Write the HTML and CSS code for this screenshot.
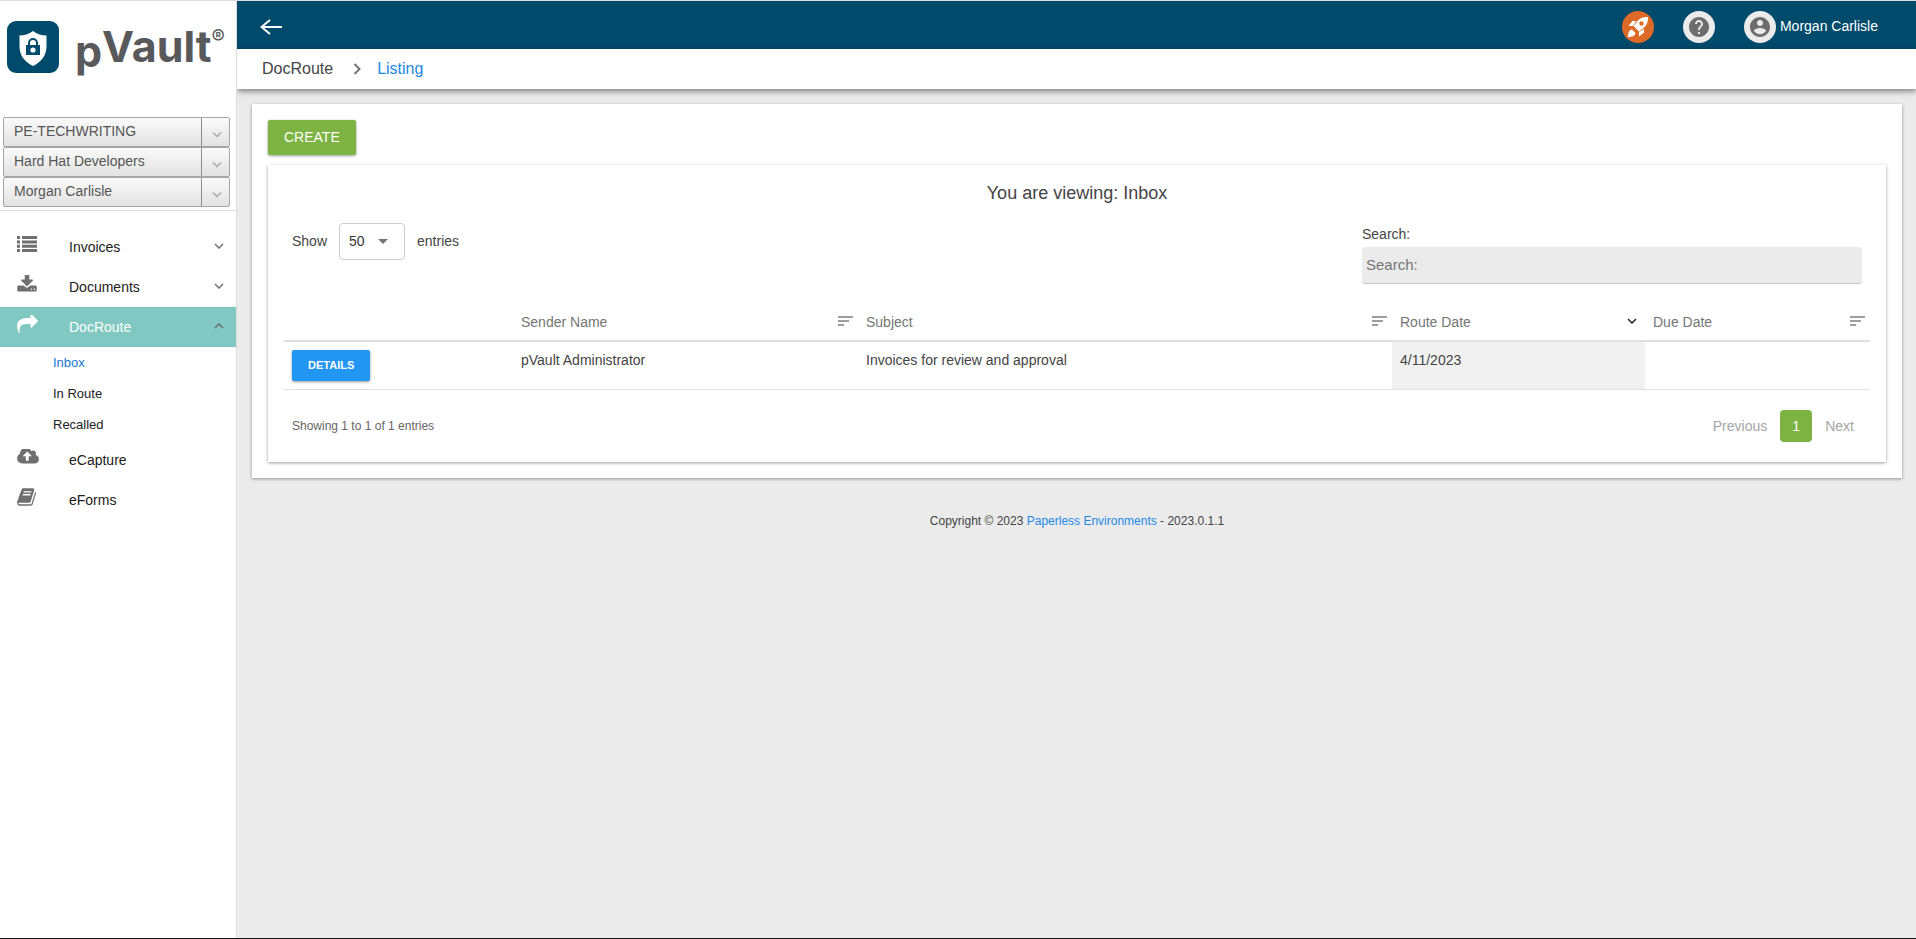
FILE: index.html
```html
<!DOCTYPE html>
<html lang="en">
<head>
<meta charset="utf-8">
<title>pVault - DocRoute</title>
<link rel="stylesheet" href="styles.css">
</head>
<body>
<div class="app">
  <aside class="sidebar">
    <div class="brand">
      <svg class="brand-mark" viewBox="0 0 52 52" width="52" height="52" aria-hidden="true">
        <rect width="52" height="52" rx="9" fill="#004a6c"/>
        <path d="M26 10c4 3 9 4.500 13.500 4.500V25c0 10-5.500 16-13.500 20-8-4-13.500-10-13.500-20V14.500C17 14.500 22 13 26 10z" fill="#fff"/>
        <rect x="19" y="24" width="14" height="10" fill="#004a6c"/>
        <path d="M22 24v-2a4 4 0 0 1 8 0v2" fill="none" stroke="#004a6c" stroke-width="2"/>
        <circle cx="26" cy="29" r="2.600" fill="#fff"/>
      </svg>
      <span class="wordmark"><span class="wordmark-p">p</span><span class="wordmark-rest">Vault</span><span class="wordmark-reg">®</span></span>
    </div>
    <div class="pickers">
      <button class="picker" type="button"><span class="picker-text">PE-TECHWRITING</span><span class="picker-arrow"><svg viewBox="0 0 12 8" width="12" height="8"><path d="M2 1.500l4 4 4-4" fill="none" stroke="#aaa" stroke-width="1.500"/></svg></span></button>
      <button class="picker" type="button"><span class="picker-text">Hard Hat Developers</span><span class="picker-arrow"><svg viewBox="0 0 12 8" width="12" height="8"><path d="M2 1.500l4 4 4-4" fill="none" stroke="#aaa" stroke-width="1.500"/></svg></span></button>
      <button class="picker" type="button"><span class="picker-text">Morgan Carlisle</span><span class="picker-arrow"><svg viewBox="0 0 12 8" width="12" height="8"><path d="M2 1.500l4 4 4-4" fill="none" stroke="#aaa" stroke-width="1.500"/></svg></span></button>
    </div>
    <nav class="menu">
      <a class="menu-item" href="#"><span class="menu-icon"><svg viewBox="0 0 20 16" width="20" height="16"><path d="M0 0h3v3H0zM5 0h15v3H5zM0 4.400h3v3H0zM5 4.400h15v3H5zM0 8.700h3v3H0zM5 8.700h15v3H5zM0 13h3v3H0zM5 13h15v3H5z"/></svg></span><span class="menu-label">Invoices</span><svg class="chev" viewBox="0 0 10 6" width="10" height="6"><path d="M1 1l4 4 4-4"/></svg></a>
      <a class="menu-item" href="#"><span class="menu-icon"><svg viewBox="0 0 1664 1536" width="20" height="18"><path transform="matrix(1 0 0 -1 0 1280)" d="M1280 64q0 26-19 45t-45 19-45-19-19-45 19-45 45-19 45 19 19 45zM1536 64q0 26-19 45t-45 19-45-19-19-45 19-45 45-19 45 19 19 45z" fill="#fff"/><path fill-rule="evenodd" d="M1280 1216a64 64 0 1 0-128 0 64 64 0 1 0 128 0zM1536 1216a64 64 0 1 0-128 0 64 64 0 1 0 128 0zM1664 992v320q0 40-28 68t-68 28H96q-40 0-68-28t-28-68V992q0-40 28-68t68-28h465l135 136q58 56 136 56t136-56l136-136h464q40 0 68 28t28 68zM1339 423q17 41-14 70L877 941q-18 19-45 19t-45-19L339 493q-31-29-14-70 17-39 59-39h256V-64q0-26 19-45t45-19h256q26 0 45 19t19 45v448h256q42 0 59 39z"/></svg></span><span class="menu-label">Documents</span><svg class="chev" viewBox="0 0 10 6" width="10" height="6"><path d="M1 1l4 4 4-4"/></svg></a>
      <a class="menu-item menu-item-active" href="#"><span class="menu-icon"><svg viewBox="0 0 1792 1536" width="21" height="18"><path transform="matrix(1 0 0 -1 0 1408)" d="M1792 896q0-26-19-45L1261 339q-19-19-45-19t-45 19-19 45v256H928q-98 0-175.500-6t-154-21.500-133-42.500-105.500-69.500-80-101-48.500-138.500T214 80q0-55 5-123 0-6 2.500-23.500T224-93q0-15-8.500-25t-23.500-10q-16 0-28 17-7 9-13 22t-13.500 30-10.500 24Q0 250 0 417q0 199 53 333 162 403 875 403h224v256q0 26 19 45t45 19 45-19l512-512q19-19 19-46z"/></svg></span><span class="menu-label">DocRoute</span><svg class="chev" viewBox="0 0 10 6" width="10" height="6"><path d="M1 5l4-4 4 4"/></svg></a>
      <a class="submenu-item submenu-item-current" href="#">Inbox</a>
      <a class="submenu-item" href="#">In Route</a>
      <a class="submenu-item" href="#">Recalled</a>
      <a class="menu-item" href="#"><span class="menu-icon"><svg viewBox="0 0 1920 1408" width="22" height="16"><path transform="matrix(1 0 0 -1 0 1280)" d="M1280 672q0 14-9 23L919 1047q-9 9-23 9t-23-9L522 696q-10-12-10-24 0-14 9-23t23-9h224V288q0-13 9.500-22.500T800 256h192q13 0 22.500 9.500t9.500 22.500v352h224q13 0 22.500 9.500t9.500 22.500zM1920 384q0-159-112.500-271.500T1536 0H448Q263 0 131.500 131.500T0 448q0 130 70 240t188 165q-2 30-2 43 0 212 150 362t362 150q156 0 285.500-87t188.500-231q71 62 166 62 106 0 181-75t75-181q0-76-41-138 130-31 213.500-135.500T1920 384z"/></svg></span><span class="menu-label">eCapture</span></a>
      <a class="menu-item" href="#"><span class="menu-icon"><svg viewBox="0 0 1664 1536" width="19" height="18"><path transform="matrix(1 0 0 -1 0 1408)" d="M1639 1058q40-57 18-129L1382 23q-19-64-76.500-107.500T1183-128H260q-77 0-148.500 53.500T12 57q-24 67-2 127 0 4 3 27t4 37q1 8-3 21.500t-3 19.500q2 11 8 21t16.500 23.500T52 357q23 38 45 91.500t30 91.500q3 10 .5 30t-.5 28q3 11 17 28t17 23q21 36 42 92t25 90q1 9-2.500 32t.5 28q4 13 22 30.500t22 22.500q19 26 42.500 84.500T340 1125q1 8-3 25.500t-2 26.500q2 8 9 18t18 23 17 21q8 12 16.500 30.500t15 35 16 36 19.500 32 26.500 23.500 36 11.500 47.500-5.500l-1-3q38 9 51 9h761q74 0 114-56t18-130l-274-906q-36-119-71.500-153.500T1025 128H156q-27 0-38-15-11-16-1-43 24-70 144-70h923q29 0 56 15.500t35 41.500l300 987q7 22 5 57 38-15 59-43zM575 1056q-4-13 2-22.500t20-9.500h608q13 0 25.500 9.500T1247 1056l21 64q4 13-2 22.500t-20 9.500H638q-13 0-25.500-9.500T596 1120zM492 800q-4-13 2-22.500t20-9.500h608q13 0 25.500 9.500T1164 800l21 64q4 13-2 22.500t-20 9.500H555q-13 0-25.500-9.500T513 864z"/></svg></span><span class="menu-label">eForms</span></a>
    </nav>
  </aside>
  <div class="page">
    <header class="topbar">
      <button class="back" type="button" aria-label="Back"><svg viewBox="0 0 22 16" width="22" height="16"><path d="M22 8H2M10 1L1.500 8l8.500 7" fill="none" stroke="#fff" stroke-width="2"/></svg></button>
      <div class="top-actions">
        <button class="round round-orange" type="button" aria-label="What's new"><svg viewBox="0 0 24 24" width="24" height="24" fill="#fff"><path fill-rule="evenodd" d="M22 2c-5-.3-9 1.500-11.500 5L7.500 11l5.500 5.500 4-3c3.500-2.500 5.300-6.500 5-11.500zM15.500 10.700a2.200 2.200 0 1 1 0-4.400 2.200 2.200 0 0 1 0 4.400zM10 6H6.500L2.500 11H7zM18 14v3.500L13 21.500V17zM6 14.500l3.500 3.500C9 21 6 22 2 22c0-4 1-7 4-7.500z"/></svg></button>
        <button class="round" type="button" aria-label="Help"><svg viewBox="2 2 20 20" width="20" height="20"><path fill="#6d6d6d" d="M12 2C6.480 2 2 6.480 2 12s4.480 10 10 10 10-4.480 10-10S17.520 2 12 2zm1 17h-2v-2h2v2zm2.070-7.750l-.9.920C13.450 12.900 13 13.500 13 15h-2v-.5c0-1.100.45-2.100 1.170-2.830l1.240-1.260c.37-.36.590-.86.590-1.410 0-1.100-.9-2-2-2s-2 .9-2 2H8c0-2.210 1.790-4 4-4s4 1.790 4 4c0 .88-.36 1.680-.93 2.250z"/></svg></button>
        <button class="user" type="button"><span class="round"><svg viewBox="2 2 20 20" width="20" height="20"><path fill="#6d6d6d" d="M12 2C6.480 2 2 6.480 2 12s4.480 10 10 10 10-4.480 10-10S17.520 2 12 2zm0 3c1.660 0 3 1.340 3 3s-1.340 3-3 3-3-1.340-3-3 1.340-3 3-3zm0 14.200c-2.500 0-4.710-1.280-6-3.220.03-1.990 4-3.080 6-3.080 1.990 0 5.970 1.090 6 3.080-1.290 1.940-3.500 3.220-6 3.220z"/></svg></span><span class="user-name">Morgan Carlisle</span></button>
      </div>
    </header>
    <nav class="crumbs" aria-label="Breadcrumb">
      <span>DocRoute</span>
      <svg viewBox="0 0 8 12" width="8" height="12"><path d="M1.500 1l5 5-5 5" fill="none" stroke="#757575" stroke-width="2"/></svg>
      <a href="#">Listing</a>
    </nav>
    <main class="content">
      <section class="card">
        <button class="create" type="button">CREATE</button>
        <div class="panel">
          <h1 class="title">You are viewing: Inbox</h1>
          <div class="filters">
            <div class="length">
              <label for="len">Show</label>
              <span class="select-wrap"><select id="len"><option>50</option></select><svg viewBox="0 0 10 5" width="10" height="5"><path d="M0 0h10L5 5z" fill="#757575"/></svg></span>
              <span>entries</span>
            </div>
            <div class="search">
              <label for="q">Search:</label>
              <input id="q" type="text" placeholder="Search:">
            </div>
          </div>
          <table class="grid">
            <colgroup><col class="c-action"><col class="c-sender"><col class="c-subject"><col class="c-route"><col class="c-due"></colgroup>
            <thead>
              <tr>
                <th></th>
                <th><div class="th">Sender Name<svg class="sort" viewBox="0 0 16 10" width="16" height="10"><path d="M0 0h15v2H0zM0 4h11v2H0zM0 8h6v2H0z"/></svg></div></th>
                <th><div class="th">Subject<svg class="sort" viewBox="0 0 16 10" width="16" height="10"><path d="M0 0h15v2H0zM0 4h11v2H0zM0 8h6v2H0z"/></svg></div></th>
                <th><div class="th">Route Date<svg class="sorted" viewBox="0 0 10 6" width="10" height="6"><path d="M1 1l4 4 4-4" fill="none" stroke="#212121" stroke-width="1.500"/></svg></div></th>
                <th><div class="th">Due Date<svg class="sort" viewBox="0 0 16 10" width="16" height="10"><path d="M0 0h15v2H0zM0 4h11v2H0zM0 8h6v2H0z"/></svg></div></th>
              </tr>
            </thead>
            <tbody>
              <tr>
                <td><button class="details" type="button">DETAILS</button></td>
                <td>pVault Administrator</td>
                <td>Invoices for review and approval</td>
                <td class="is-sorted">4/11/2023</td>
                <td></td>
              </tr>
            </tbody>
          </table>
          <div class="table-foot">
            <span class="info">Showing 1 to 1 of 1 entries</span>
            <div class="pager">
              <button type="button" class="pager-step">Previous</button>
              <button type="button" class="pager-page">1</button>
              <button type="button" class="pager-step">Next</button>
            </div>
          </div>
        </div>
      </section>
      <footer class="footer">Copyright © 2023 <a href="#">Paperless Environments</a> - 2023.0.1.1</footer>
    </main>
  </div>
</div>
</body>
</html>
```

FILE: styles.css
```css
* { box-sizing: border-box; }

body {
  margin: 0;
  font-family: "Liberation Sans", Arial, sans-serif;
  font-size: 14px;
  line-height: 20px;
  color: #444;
  background: #ebebeb;
}

button, input, select { font-family: inherit; }
button { border: 0; margin: 0; padding: 0; background: none; cursor: pointer; }
a { color: #1e88e5; text-decoration: none; }
svg { display: block; flex: none; }

.app {
  display: flex;
  min-height: 100vh;
  border-top: 1px solid #dcdcdc;
  border-bottom: 1px solid #151515;
}

/* Sidebar */
.sidebar {
  position: relative;
  z-index: 1;
  flex: none;
  width: 237px;
  background: #fff;
  border-right: 1px solid #dcdcdc;
}
.brand {
  display: flex;
  align-items: flex-start;
  height: 116px;
  padding: 20px 0 0 7px;
}
.wordmark {
  display: flex;
  align-items: flex-start;
  margin-left: 16px;
  font-family: Inter, sans-serif;
  font-weight: 700;
  font-size: 43px;
  line-height: 50px;
  color: #58595b;
}
.wordmark-p { padding-top: 5px; }
.wordmark-reg { padding-top: 4px; font-size: 20px; line-height: 24px; font-weight: 500; }

.pickers {
  padding: 0 6px 3px 3px;
  border-bottom: 1px solid #dcdcdc;
}
.picker {
  display: flex;
  width: 100%;
  height: 30px;
  border: 1px solid #a6a6a6;
  border-radius: 2px;
  background: linear-gradient(#fafafa, #e2e2e2);
  color: #555;
  font-size: 14px;
  line-height: 26px;
  text-align: left;
}
.picker-text { flex: 1; padding-left: 10px; }
.picker-arrow {
  display: flex;
  align-items: center;
  justify-content: center;
  width: 28px;
  height: 28px;
  padding: 6px 0 0 2px;
  border-left: 1px solid #8c8c8c;
}

.menu { padding-top: 16px; }
.menu-item {
  display: flex;
  align-items: center;
  height: 40px;
  padding: 0 12px 0 17px;
  color: #212121;
}
.menu-icon { width: 52px; padding-bottom: 6px; fill: #6f6f6f; }
.menu-label { flex: 1; }
.chev { fill: none; stroke: #6f6f6f; stroke-width: 1.5; margin-bottom: 3px; }
.menu-item-active { background: #80c8c1; color: #fff; }
.menu-item-active .menu-icon { fill: #fff; }
.submenu-item {
  display: block;
  padding-left: 53px;
  font-size: 13px;
  line-height: 31px;
  color: #212121;
}
.submenu-item-current { color: #1976d2; }

/* Header */
.page { flex: 1; min-width: 0; }
.topbar {
  display: flex;
  align-items: center;
  justify-content: space-between;
  height: 48px;
  padding: 3px 38px 0 23px;
  background: #004a6c;
}
.top-actions { display: flex; align-items: center; gap: 29px; }
.round {
  display: flex;
  align-items: center;
  justify-content: center;
  width: 32px;
  height: 32px;
  border-radius: 50%;
  background: #ebebeb;
}
.round-orange { background: #dd6b27; }
.user { display: flex; align-items: center; gap: 4px; color: #fff; font-size: 14px; }
.user-name { padding-bottom: 2px; }

.crumbs {
  position: relative;
  display: flex;
  align-items: center;
  gap: 18px;
  height: 40px;
  padding-left: 25px;
  background: #fff;
  box-shadow: 0 2px 6px rgba(0, 0, 0, .5);
  font-size: 16px;
}
.crumbs svg { margin-left: 2px; margin-right: -2px; }

/* Listing */
.content { padding: 15px 14px 0 15px; }
.card {
  padding: 16px;
  background: #fff;
  box-shadow: 0 1px 3px rgba(0, 0, 0, .4);
}
.create {
  height: 35px;
  padding: 0 16px 2px;
  border-radius: 2px;
  background: #7cb342;
  box-shadow: 0 1px 3px rgba(0, 0, 0, .4);
  color: #fff;
  font-size: 14px;
}
.panel {
  margin-top: 10px;
  padding: 16px 16px 20px;
  box-shadow: 0 1px 3px rgba(0, 0, 0, .4);
}
.title {
  margin: 0;
  font-size: 18px;
  line-height: 24px;
  font-weight: 400;
  text-align: center;
}
.filters {
  display: flex;
  justify-content: space-between;
  padding: 18px 8px 0;
}
.length { display: flex; align-items: center; gap: 12px; height: 36px; }
.select-wrap { position: relative; }
.select-wrap select {
  display: block;
  width: 66px;
  height: 37px;
  padding: 0 0 0 9px;
  appearance: none;
  border: 1px solid #ccc;
  border-radius: 4px;
  background: #fff;
  color: #333;
  font-size: 14px;
}
.select-wrap svg { position: absolute; right: 17px; top: 16px; pointer-events: none; }
.search { display: flex; flex-direction: column; gap: 3px; width: 500px; padding-top: 1px; }
.search input {
  width: 100%;
  height: 37px;
  padding: 0 4px 2px;
  border: 0;
  border-bottom: 1px solid #c8c8c8;
  border-radius: 4px;
  background: #ebebeb;
  font-size: 15px;
}
.search input::placeholder { color: #757575; }

.grid {
  width: 100%;
  margin-top: 18px;
  table-layout: fixed;
  border-collapse: separate;
  border-spacing: 0;
}
.c-action { width: 229px; }
.c-sender { width: 345px; }
.c-subject { width: 534px; }
.c-route { width: 253px; }
.grid th {
  height: 40px;
  padding: 2px 4px 0 8px;
  border-bottom: 2px solid #e0e0e0;
  color: #757575;
  font-weight: 400;
  text-align: left;
}
.th { display: flex; align-items: center; justify-content: space-between; }
.sort { fill: #9e9e9e; margin-bottom: 2px; }
.sorted { margin: 0 4px 2px 0; }
.grid td {
  height: 48px;
  padding: 8px;
  border-bottom: 1px solid #e0e0e0;
  vertical-align: top;
}
.is-sorted { background: #f1f1f1; }
.details {
  display: block;
  height: 31px;
  padding: 0 16px 2px;
  border-radius: 2px;
  background: #2196f3;
  box-shadow: 0 1px 3px rgba(0, 0, 0, .4);
  color: #fff;
  font-size: 11px;
  font-weight: 700;
}
.table-foot {
  display: flex;
  align-items: center;
  justify-content: space-between;
  padding: 20px 16px 0 8px;
}
.info { font-size: 12px; color: #666; }
.pager { display: flex; align-items: center; gap: 13px; }
.pager-step { color: #a5a5a5; font-size: 14px; }
.pager-page {
  width: 32px;
  height: 32px;
  border-radius: 4px;
  background: #7cb342;
  color: #fff;
  font-size: 14px;
}

.footer { padding-top: 33px; text-align: center; font-size: 12px; }
```
